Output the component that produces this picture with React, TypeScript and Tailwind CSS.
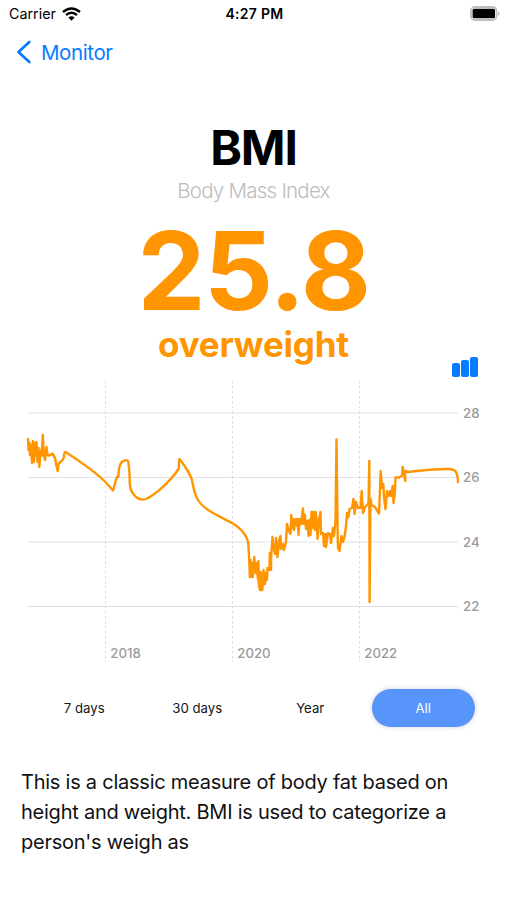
import { useState } from "react";
import clsx from "clsx";

const ranges = ["7 days", "30 days", "Year", "All"];

const yTicks = [
  { label: "28", y: 413 },
  { label: "26", y: 477.5 },
  { label: "24", y: 542 },
  { label: "22", y: 606.5 },
];

const xTicks = [
  { label: "2018", x: 105.5 },
  { label: "2020", x: 232.5 },
  { label: "2022", x: 359.5 },
];

const line = [
  "M28 439L28.5 450L29.5 443L30 455L31 445L32 463L33 441L34 462L35 443L36 456L36.5 442L37.5 462L38.5 448L39.3 467",
  "L40.5 451L41.5 456L42.8 435L44 455L45 460L46.5 447L47.5 455L49.5 455.5L52.5 453.5C55 457 56 461 56 464",
  "L57.7 471L58.5 464C60 461 63 462 64 457C64 454 64 452 65.5 452C80 461 102 477 108 485L113 490.5",
  "C114.5 486 115 482 117 477L118.5 476.5C118.5 470 119 461 125 460.5Q128.5 459.5 128.5 463L129.5 474",
  "C130 481 129 487 131.5 491C135 498 141 501 146 499C157 494 172 479 178.5 469C179.5 466 178.5 459 179.5 459",
  "C182 462 190 473 192 480C193.5 488 194 493 198 500C204 510 219 516 232 523C242 529 248 536 248.5 546",
  "L249.5 566L249.8 577L250.5 560L251.3 577L252 563L252.8 577L254.3 557L255.5 573L256.3 563L257 569L258 580L258.4 561L259 586",
  "L260 590L260.6 572L261.3 590L262 576L262.4 590L263.5 570L265 584L265.5 573L267 580L267.5 568L269.5 570L269.8 553L271 570L271.3 553",
  "L272.5 537L273.5 549L275 554",
  "L276 538L277.5 557L279 541L280.5 536L281 549L283 544L284 550L286 542L287 524L289 531L290.5 534L291.3 515",
  "L292 528L293 519L294 530L295.5 519L297 526L297.5 519L298.5 535L299.5 519L301 524L303 508.5L303.5 524L305 515L306 529L307.5 521",
  "L308.5 536L309.5 520L310.5 535L311.5 512L312.5 528L313.5 512L315 530L315.7 512L317 525L317.5 539L319 520L320.5 512L321 534",
  "L323 533L324 546L325.5 534L326 547L328 533L330 534L331 543L333 528L334 536L335.5 520L336.5 439.5L337.5 525",
  "L338 548L339.5 551L341.5 536L343 542L344.5 537L346 526L347 513L348.5 517L349.5 509L352 508L353.5 499L354.5 514",
  "L356 502L358 508L360.5 508L361.7 491L363 513L365 507L367 505L368.5 503L369.3 461L369.6 602L370.5 499L371.5 505",
  "L375 507L379 513.5L380.7 471L382 488L383.3 484L384 497L385.5 509L387 491L388.5 496L390 491L391 496L392.7 486",
  "L393.5 503L394.8 493L395.5 477.5L399 477.5L402 475.5L402.7 467L403.5 472L405.3 481L405 471L408 472",
  "C418 471 432 469 448 469Q455 469 456.5 473Q458 477 458 482",
].join("");

const StatusBar = () => (
  <div className="grid h-[27px] grid-cols-3 items-center pl-[9px] pr-[7px]">
    <div className="flex items-center gap-1.5 text-[14.3px]">
      <span>Carrier</span>
      <svg width="19" height="14" viewBox="0 0 19 14" fill="none">
        <path d="M1 5Q9.5 -2 18 5" stroke="black" strokeWidth="2.5" />
        <path d="M4 8Q9.5 3.6 15 8" stroke="black" strokeWidth="2.4" />
        <path d="M6.4 10.6Q9.5 7.9 12.6 10.6L9.5 13.8Z" fill="black" />
      </svg>
    </div>
    <span className="text-center text-[14px] font-semibold tracking-[0.3px]">
      4:27 PM
    </span>
    <svg
      width="31"
      height="16"
      viewBox="0 0 31 16"
      className="justify-self-end"
    >
      <rect
        x="2"
        y="1"
        width="25.5"
        height="13"
        rx="4"
        fill="white"
        stroke="#bdbdbd"
        strokeWidth="1.8"
      />
      <rect x="3.6" y="2.8" width="22.4" height="9.4" rx="1.5" fill="black" />
      <path d="M29 5.5Q32.5 7.5 29 9.8Z" fill="#bdbdbd" />
    </svg>
  </div>
);

const Chart = () => (
  <svg
    width="507"
    height="290"
    viewBox="0 377 507 290"
    className="block"
    fontSize="13.2"
    fontWeight="500"
    fill="#9a9a9c"
  >
    {yTicks.map(({ label, y }) => (
      <g key={label}>
        <path d={`M27.5 ${y}H458`} stroke="#e1e1e3" strokeWidth="1.1" />
        <text x="463" y={y + 4.5}>
          {label}
        </text>
      </g>
    ))}
    {xTicks.map(({ label, x }) => (
      <g key={label}>
        <path
          d={`M${x} 381V662`}
          stroke="#dcdcde"
          strokeWidth="1.1"
          strokeDasharray="2.5 2.5"
        />
        <text x={x + 4.8} y="657.5">
          {label}
        </text>
      </g>
    ))}
    <path
      d={line}
      fill="none"
      stroke="#ff9500"
      strokeWidth="2.4"
      strokeLinecap="round"
      strokeLinejoin="round"
    />
  </svg>
);

const App = () => {
  const [range, setRange] = useState("All");

  return (
    <main className="h-[900px] w-[507px] overflow-hidden bg-white font-['Inter',sans-serif] text-black">
      <StatusBar />
      <nav className="flex h-[50px] items-center pl-4 text-[#087cff]">
        <button className="flex items-center gap-[9px] text-[20.5px] tracking-[-0.4px]">
          <svg width="16" height="24" viewBox="0 0 16 24" fill="none">
            <path
              d="M13.3 2L2.5 12L13.3 22"
              stroke="currentColor"
              strokeWidth="2.7"
              strokeLinecap="round"
              strokeLinejoin="round"
            />
          </svg>
          <span className="pt-0.5">Monitor</span>
        </button>
      </nav>
      <header className="mt-[41px] text-center">
        <h1 className="text-[48px] leading-[60px] font-bold tracking-[-1.2px]">
          BMI
        </h1>
        <p className="text-[20.5px] leading-[26px] font-light tracking-[-0.75px] text-[#bcbcbe]">
          Body Mass Index
        </p>
        <p className="mt-[13px] text-[108px] leading-[107px] font-bold tracking-[-1.5px] text-[#ff9500]">
          25.8
        </p>
        <p className="text-[35px] leading-10 font-bold tracking-[-0.2px] text-[#ff9500]">
          overweight
        </p>
      </header>
      <div className="-mt-[7px] flex h-5 items-end justify-end gap-[1px] pr-[29px] *:w-2 *:rounded-[2px] *:bg-[#087cff]">
        <span className="h-[14px]" />
        <span className="h-[17px]" />
        <span className="h-5" />
      </div>
      <Chart />
      <div className="mt-[21.5px] ml-[32.5px] flex gap-[9.5px]">
        {ranges.map((item) => (
          <button
            key={item}
            onClick={() => setRange(item)}
            className={clsx(
              "h-[38px] w-[103.5px] rounded-full pt-0.5 text-[13.2px]",
              item === range
                ? "bg-[#5795fa] text-white shadow-[0_0_5px_rgba(0,0,0,0.2)]"
                : "text-[#151515]"
            )}
          >
            {item}
          </button>
        ))}
      </div>
      <p className="mt-[40.5px] ml-[21px] w-[450px] text-[20px] leading-[30px] tracking-[-0.24px] text-[#111]">
        This is a classic measure of body fat based on height and weight. BMI is
        used to categorize a person's weigh as
      </p>
    </main>
  );
};

export default App;
